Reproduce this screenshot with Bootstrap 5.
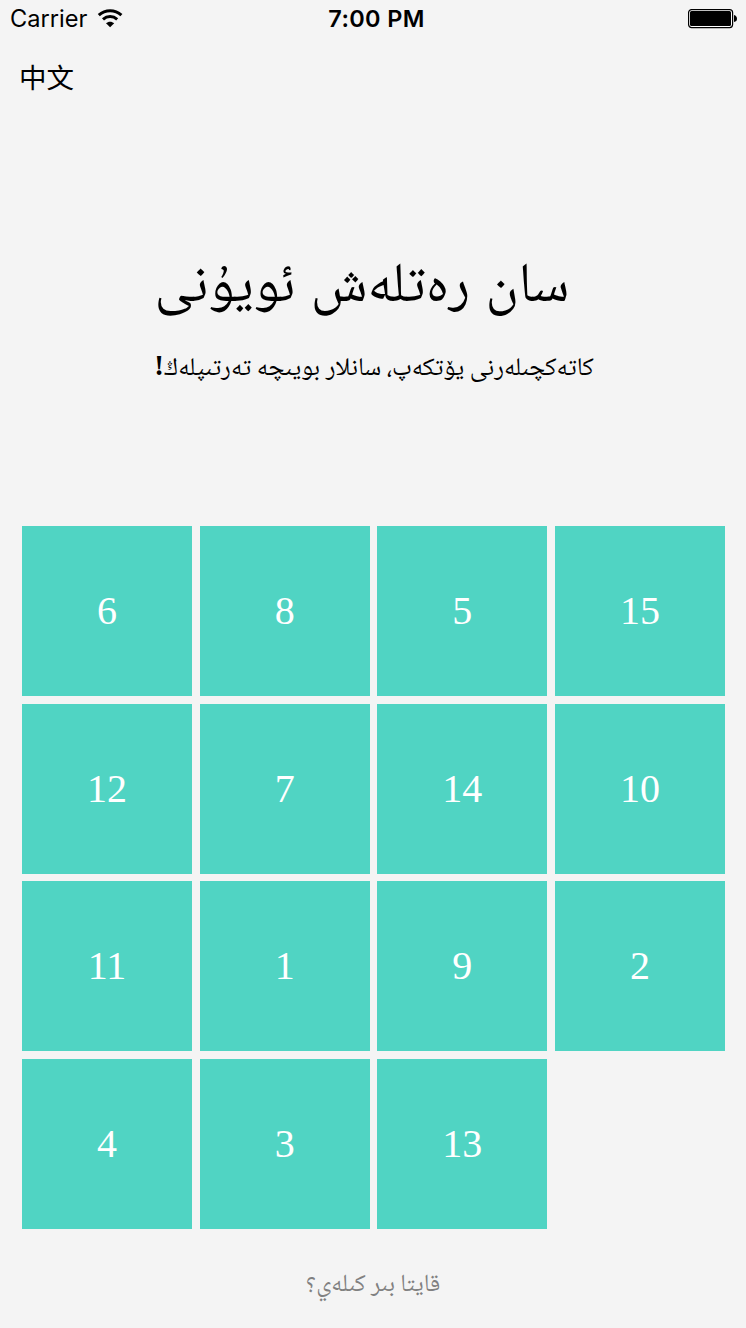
<!DOCTYPE html>
<html lang="ug">
<head>
<meta charset="utf-8">
<meta name="viewport" content="width=device-width, initial-scale=1">
<title>سان رەتلەش ئويۇنى</title>
<link href="https://cdn.jsdelivr.net/npm/bootstrap@5.3.0/dist/css/bootstrap.min.css" rel="stylesheet">
<style>
body { background: #f4f4f4; color: #000; height: 1328px; overflow: hidden; font-family: Inter, "Liberation Sans", sans-serif; }
.status-bar { height: 38px; padding: 0 9px 0 10px; font-size: 23.6px; line-height: 38px; }
.status-side { flex: 1 1 0; }
.clock { font-size: 23.5px; font-weight: 600; letter-spacing: .35px; padding-left: 6px; }
.wifi { margin-bottom: 2px; margin-left: 9px; }
.lang-row { height: 82px; padding-left: 19px; padding-top: 18px; }
.lang-btn { font: 27.5px/40px "Noto Sans CJK SC", sans-serif; color: #000; vertical-align: top; }
.uyghur { font-family: "Noto Naskh Arabic", "DejaVu Sans", sans-serif; white-space: nowrap; margin: 0; }
.game-title { height: 90px; margin-top: 124px; font-size: 56px; line-height: 90px; padding-right: 22px; word-spacing: 3px; }
.game-hint { height: 40px; margin-top: 16px; font-size: 25.4px; line-height: 40px; padding-left: 2px; }
.bang { font-family: "Liberation Serif", serif; font-weight: 700; font-size: 29px; line-height: 1; }
.board { grid-template-columns: repeat(4, 170px); grid-auto-rows: 170px; gap: 7.667px; margin: 136px 0 0 22px; }
.tile { background: #50d4c3; color: #fff; border: 0; border-radius: 0; font: 40px/1 "Liberation Serif", serif; padding: 0; }
.again { height: 40px; margin-top: 37px; color: #808080; font-size: 24.5px; line-height: 40px; }
</style>
</head>
<body>
<header class="status-bar d-flex align-items-center">
  <div class="status-side d-flex align-items-center">
    <span>Carrier</span>
    <svg class="wifi" width="28" height="20" viewBox="0 0 28 20" aria-label="Wi-Fi"><g fill="none" stroke="#000" stroke-width="3"><path d="M2.8 7.2C9.3 1.2 18.9 1.2 25.4 7.2"/><path d="M7 11.3C11.2 7.5 17 7.5 21.2 11.3"/></g><path d="M10 15.3C12.3 13.1 15.9 13.1 18.2 15.3L14.1 19.3Z"/></svg>
  </div>
  <span class="clock">7:00 PM</span>
  <div class="status-side d-flex justify-content-end">
    <svg width="50" height="20" viewBox="0 0 50 20" aria-label="Battery"><rect x="1.6" y=".6" width="44" height="18" rx="3" fill="#fff" stroke="#000" stroke-width="1.2"/><rect x="3" y="2" width="41" height="15" rx="1.5"/><path d="M47 6Q50 7 50 9.7T47 13Z"/></svg>
  </div>
</header>
<nav class="lang-row"><button class="btn p-0 border-0 lang-btn">中文</button></nav>
<main>
  <h1 class="uyghur game-title text-center fw-normal" dir="rtl"><span class="d-inline-block">سان رەتلەش ئويۇنى</span></h1>
  <p class="uyghur game-hint text-center" dir="rtl"><span class="d-inline-block">كاتەكچىلەرنى يۆتكەپ، سانلار بويىچە تەرتىپلەڭ<span class="bang">!</span></span></p>
  <div class="board d-grid">
    <button class="btn tile">6</button><button class="btn tile">8</button><button class="btn tile">5</button><button class="btn tile">15</button>
    <button class="btn tile">12</button><button class="btn tile">7</button><button class="btn tile">14</button><button class="btn tile">10</button>
    <button class="btn tile">11</button><button class="btn tile">1</button><button class="btn tile">9</button><button class="btn tile">2</button>
    <button class="btn tile">4</button><button class="btn tile">3</button><button class="btn tile">13</button>
  </div>
  <p class="uyghur again text-center" dir="rtl"><span class="d-inline-block">قايتا بىر كىلەي؟</span></p>
</main>
<script src="https://cdn.jsdelivr.net/npm/bootstrap@5.3.0/dist/js/bootstrap.bundle.min.js"></script>
</body>
</html>
